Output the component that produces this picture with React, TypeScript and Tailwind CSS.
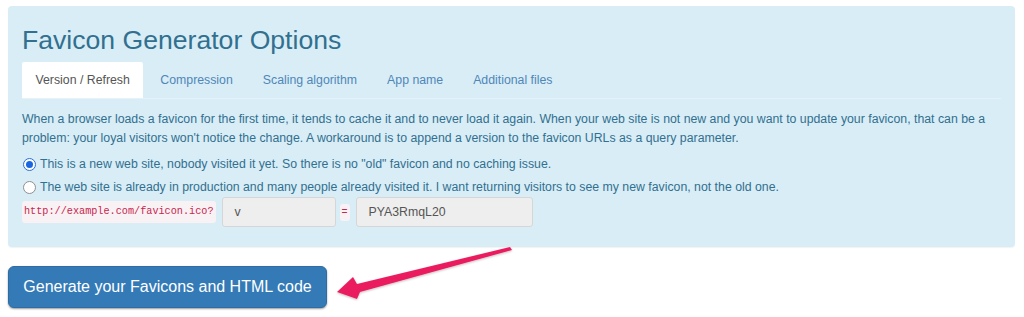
import React from "react";

export default function App() {
  const tabs = ["Version / Refresh", "Compression", "Scaling algorithm", "App name", "Additional files"];
  return (
    <div
      className="relative w-[1024px] h-[317px] bg-white overflow-hidden"
      style={{ fontFamily: '"Liberation Sans", Arial, sans-serif' }}
    >
      <div className="pt-[6px] px-[8px]">
        <div className="w-[1007px] bg-[#d9edf7] rounded-[4px] text-[#31708f] pl-[14px] pr-[14px] pt-[18px] pb-[20px] shadow-[0_1px_1px_rgba(0,0,0,0.05)]">
          <h2 className="text-[26.6px] leading-[32px] font-normal text-[#31708f]">Favicon Generator Options</h2>
          <div className="mt-[6px] flex border-b border-[#e6f2f9]">
            {tabs.map((t, i) => (
              <div
                key={t}
                className={
                  i === 0
                    ? "h-[36px] px-[13.5px] mr-[2px] bg-white rounded-t-[2px] text-[#555] text-[12.3px] leading-[36px]"
                    : "h-[36px] px-[15px] text-[#4f87b7] text-[12.3px] leading-[36px]"
                }
              >
                {t}
              </div>
            ))}
          </div>
          <p className="mt-[11px] text-[12.3px] leading-[19px]">
            When a browser loads a favicon for the first time, it tends to cache it and to never load it again. When your web site is not new and you want to update your favicon, that can be a problem: your loyal visitors won't notice the change. A workaround is to append a version to the favicon URLs as a query parameter.
          </p>
          <div className="mt-[6px] flex items-center h-[20px] text-[12.3px]">
            <span className="w-[13px] h-[13px] rounded-full border border-[#2b6fd6] bg-white flex items-center justify-center mr-[4px] ml-[1px]">
              <span className="w-[7px] h-[7px] rounded-full bg-[#1a66e0]" />
            </span>
            <span>This is a new web site, nobody visited it yet. So there is no "old" favicon and no caching issue.</span>
          </div>
          <div className="mt-[3px] flex items-center h-[20px] text-[12.3px]">
            <span className="w-[13px] h-[13px] rounded-full border border-[#8f8f8f] bg-white mr-[4px] ml-[1px]" />
            <span>The web site is already in production and many people already visited it. I want returning visitors to see my new favicon, not the old one.</span>
          </div>
          <div className="mt-[0px] flex items-center h-[30px]">
            <code
              className="bg-[#f9f2f4] text-[#c7254e] text-[10.2px] px-[2px] py-[3px] rounded-[3px]"
              style={{ fontFamily: '"Liberation Mono", "Courier New", monospace' }}
            >
              http://example.com/favicon.ico?
            </code>
            <div className="ml-[6px] w-[114px] h-[30px] bg-[#eeeeee] border border-[#d6d6d6] rounded-[3px] text-[12.3px] text-[#555] pl-[12px] leading-[28px]">
              v
            </div>
            <code
              className="ml-[4px] bg-[#f9f2f4] text-[#c7254e] text-[10px] px-[2px] py-[1px] rounded-[3px]"
              style={{ fontFamily: '"Liberation Mono", "Courier New", monospace' }}
            >
              =
            </code>
            <div className="ml-[6px] w-[177px] h-[30px] bg-[#eeeeee] border border-[#d6d6d6] rounded-[3px] text-[12.3px] text-[#555] pl-[12px] leading-[28px]">
              PYA3RmqL20
            </div>
          </div>
        </div>
        <div className="mt-[19px]">
          <button className="h-[42px] w-[319px] bg-[#337ab7] border border-[#2e6da4] rounded-[6px] text-white text-[16px] leading-[20px] shadow-[0_1px_2px_rgba(0,0,0,0.4)]">
            Generate your Favicons and HTML code
          </button>
        </div>
      </div>
      <svg className="absolute left-0 top-0 pointer-events-none" width="1024" height="317" viewBox="0 0 1024 317">
        <defs>
          <filter id="sh" x="-10%" y="-50%" width="120%" height="200%">
            <feDropShadow dx="0" dy="1" stdDeviation="1" floodColor="#000" floodOpacity="0.25" />
          </filter>
        </defs>
        <polygon
          points="337,292 353,277 357,284 510,247 512,250 360,292 357,299"
          fill="#ea1d5e"
          filter="url(#sh)"
        />
      </svg>
    </div>
  );
}
